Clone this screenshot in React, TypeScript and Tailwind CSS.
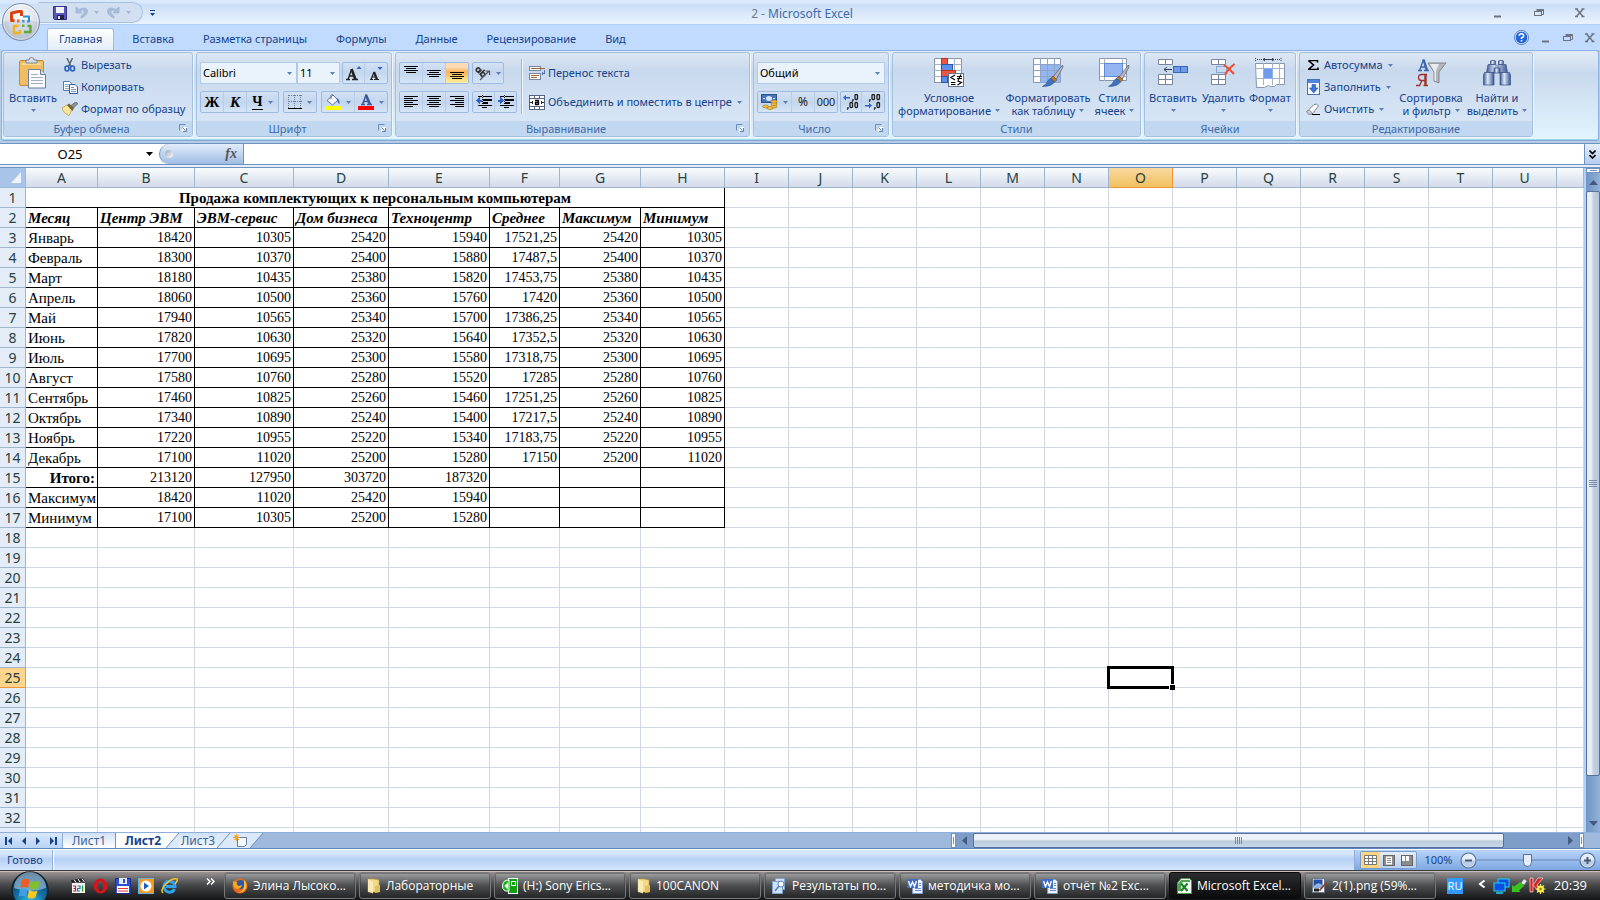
import React from "react";

type Kids = { children?: React.ReactNode };

/* ---------- small shared pieces ---------- */

const Caret = ({ className = "fill-[#5b80b5]" }: { className?: string }) => (
  <svg width="5" height="3" viewBox="0 0 5 3" className={`shrink-0 ${className}`} aria-hidden="true">
    <path d="M0 0h5L2.5 3z" />
  </svg>
);

const Launcher = ({ label }: { label: string }) => (
  <button aria-label={label} className="mr-px h-3 w-3">
    <svg width="9" height="9" viewBox="0 0 9 9" fill="none" aria-hidden="true">
      <path d="M6.5 .5h-6v6" stroke="#6a8fbf" />
      <rect x="3" y="3" width="5" height="5" fill="#fff" />
      <path d="M3.500 3.500l3 3M7.500 4v3.500H4" stroke="#5b80b5" />
    </svg>
  </button>
);

function Group({ title, width, launcher = true, children }: Kids & { title: string; width: string; launcher?: boolean }) {
  return (
    <section
      aria-label={title}
      className={`${width} flex h-[85px] shrink-0 flex-col overflow-hidden rounded-[3px] border border-[#a3c0de] bg-linear-to-b from-[#dde7f3] from-0% via-[#c9d9ed] via-20% to-[#dbe9f8] shadow-[1px_1px_0_#eef6ff]`}
    >
      <div className="flex min-h-0 flex-1">{children}</div>
      <div className="flex h-[15px] shrink-0 items-center bg-[#c2d8f0] text-[11px] leading-[15px] text-[#3e6aaa]">
        <span className="flex-1 text-center">{title}</span>
        {launcher && <Launcher label={title} />}
      </div>
    </section>
  );
}

function BigButton({ icon, lines, caretBelow = false, width }: { icon: React.ReactNode; lines: string[]; caretBelow?: boolean; width: string }) {
  return (
    <button className={`${width} flex shrink-0 flex-col items-center pt-[4px] text-[11px] leading-[13px] whitespace-nowrap text-[#15428b]`}>
      <span className="mb-[2px] flex h-[32px] items-center">{icon}</span>
      {lines.map((line, i) => (
        <span key={line} className="flex items-center gap-1">
          {line}
          {!caretBelow && i === lines.length - 1 && <Caret />}
        </span>
      ))}
      {caretBelow && (
        <span className="flex h-[12px] items-center">
          <Caret />
        </span>
      )}
    </button>
  );
}

function SmallButton({ icon, label, caret = false }: { icon: React.ReactNode; label: string; caret?: boolean }) {
  return (
    <button className="flex h-[22px] items-center gap-[3px] text-[11px] whitespace-nowrap text-[#15428b]">
      <span className="flex w-4 justify-center">{icon}</span>
      <span>{label}</span>
      {caret && <Caret className="ml-[2px] fill-[#5b80b5]" />}
    </button>
  );
}

const Cluster = ({ children }: Kids) => (
  <div className="flex h-[22px] divide-x divide-[#b7cde8] overflow-hidden rounded-[2px] border border-[#9dbbe0] bg-linear-to-b from-[#d3e1f3] via-[#c3d6ee] to-[#d6e5f7]">
    {children}
  </div>
);

function Tool({ label, width = "w-[23px]", active = false, children }: Kids & { label: string; width?: string; active?: boolean }) {
  return (
    <button
      aria-label={label}
      className={`${width} flex items-center justify-center gap-[5px] leading-none ${active ? "bg-linear-to-b from-[#fbdbb5] from-20% via-[#fdb150] via-45% to-[#fff0a0]" : ""}`}
    >
      {children}
    </button>
  );
}

function Picker({ label, value, width }: { label: string; value: string; width: string }) {
  return (
    <label className={`${width} flex h-[22px] items-center border border-[#b0cae9] bg-[#eaf2fb] pr-1`}>
      <span className="sr-only">{label}</span>
      <select defaultValue={value} className="h-full min-w-0 flex-1 appearance-none bg-transparent pl-[2px] text-[11px] leading-[16px] text-black outline-none">
        <option>{value}</option>
      </select>
      <Caret />
    </label>
  );
}

/* ---------- drawings ---------- */

const OfficeOrb = () => (
  <svg width="40" height="40" viewBox="0 0 40 40" aria-hidden="true">
    <defs>
      <radialGradient id="orb" cx="50%" cy="35%" r="65%">
        <stop offset="0" stopColor="#ffffff" />
        <stop offset=".6" stopColor="#dfe4ec" />
        <stop offset="1" stopColor="#a7b3c6" />
      </radialGradient>
    </defs>
    <circle cx="20" cy="20" r="18.500" fill="url(#orb)" stroke="#7f8ea6" />
    <circle cx="20" cy="20" r="17" fill="none" stroke="#fff" strokeOpacity=".8" />
    <path d="M2.500 20a17.500 17.500 0 0 0 35 0q-17-5-35 0z" fill="#b8c2d2" opacity=".45" />
    <g fill="none" strokeLinejoin="round">
      <path d="M13.500 18.500H10.500V11l7-1.500h3V14" stroke="#d8430f" strokeWidth="3" />
      <path d="M22 14.500h6v5H26" stroke="#2f8fd6" strokeWidth="2" />
      <path d="M17 24h-4V31h6v-3" stroke="#f2b21b" strokeWidth="2.400" />
      <path d="M23 30h6.500v-6h-3" stroke="#63a53a" strokeWidth="2.400" />
    </g>
    <path d="M16 17.500h2.500v3H16z" fill="#e76a1f" />
    <path d="M21 18h2.500v2.500H21z" fill="#3d9be0" />
    <path d="M16 22.500h2.500v2H16z" fill="#f5c02c" />
    <path d="M21 22.500h2.500v2.500H21z" fill="#6cb23e" />
  </svg>
);

const SaveIcon = () => (
  <svg width="14" height="14" viewBox="0 0 14 14" aria-hidden="true">
    <path d="M.5 .5h13v13h-12l-1-1z" fill="#5a55b8" stroke="#36318c" />
    <rect x="3" y="1" width="8" height="6" fill="#eef3fb" />
    <rect x="4" y="9" width="7" height="5" fill="#23214e" />
    <rect x="5" y="10" width="2" height="3" fill="#dfe4f2" />
  </svg>
);

const UndoIcon = ({ flip = false }: { flip?: boolean }) => (
  <svg width="13" height="13" viewBox="0 0 13 13" className={flip ? "-scale-x-100" : ""} aria-hidden="true">
    <path d="M1 1v6h6L5 5q3-2 4 0 1 2.500-3 5v2q7-3 6.500-7.500Q11.500 0 4 3.500z" fill="#a9bdd9" stroke="#94abcc" strokeWidth=".6" />
  </svg>
);

const WinIcon = ({ kind }: { kind: "min" | "restore" | "close" }) => (
  <svg width="10" height="10" viewBox="0 0 10 10" fill="none" stroke="#6d7480" aria-hidden="true">
    {kind === "min" && <path d="M1 8.500h7" strokeWidth="2" />}
    {kind === "restore" && (
      <>
        <path d="M3 1.500h6.500v5H8" />
        <path d="M2.500 2h7" strokeWidth="2" />
        <rect x=".5" y="3.500" width="7" height="4" />
      </>
    )}
    {kind === "close" && <path d="M1.500 1l6.500 7.500M8 1L1.500 8.500M0 1h3M6.500 1h3M0 8.500h3M6.500 8.500h3" strokeWidth="1.500" />}
  </svg>
);

const HelpIcon = () => (
  <svg width="15" height="15" viewBox="0 0 15 15" aria-hidden="true">
    <circle cx="7.500" cy="7.500" r="6.500" fill="#2467d6" stroke="#fff" strokeWidth="1.200" />
    <circle cx="7.500" cy="7.500" r="7" fill="none" stroke="#2f5ca8" strokeWidth=".8" />
    <path d="M5.300 6q0-2.200 2.200-2.200T9.700 5.700Q9.700 7 7.500 8v1M7.500 10v1.500" fill="none" stroke="#fff" strokeWidth="1.500" />
  </svg>
);

const PasteIcon = () => (
  <svg width="28" height="32" viewBox="0 0 28 32" aria-hidden="true">
    <rect x=".5" y="3.500" width="24" height="25" rx="1.500" fill="#f0bd62" stroke="#c28b3a" />
    <path d="M3 6h19v2H3z" fill="#f8d893" />
    <path d="M7 6V3h3q0-2.500 2.500-2.500T15 3h3v3z" fill="#d9dee6" stroke="#66707f" strokeWidth=".8" />
    <path d="M9.500 12.500h12l5 5v13.500h-17z" fill="#fbfcfe" stroke="#6b7f9d" />
    <path d="M21.500 12.500v5h5" fill="#d5deeb" stroke="#6b7f9d" />
    <path d="M12 17.500h7M12 20.500h12M12 23.500h12M12 26.500h12" stroke="#9fb0c8" />
  </svg>
);

const CutIcon = () => (
  <svg width="12" height="14" viewBox="0 0 12 14" fill="none" aria-hidden="true">
    <path d="M3 0l4 8.500M8.500 0L4.500 8.500" stroke="#5c6470" strokeWidth="1.500" />
    <ellipse cx="3" cy="10.500" rx="2" ry="2.500" stroke="#2b5fc0" strokeWidth="1.600" />
    <ellipse cx="8.500" cy="10.500" rx="2" ry="2.500" stroke="#2b5fc0" strokeWidth="1.600" />
  </svg>
);

const CopyIcon = () => (
  <svg width="15" height="13" viewBox="0 0 15 13" aria-hidden="true">
    <path d="M.5 .5h6l2 2v7h-8z" fill="#fff" stroke="#4f79b8" />
    <path d="M2 3.500h4M2 5.500h4M2 7.500h4" stroke="#88a9da" />
    <path d="M6.500 3.500h5.500l2.500 2.500v6.500h-8z" fill="#fff" stroke="#345fa6" />
    <path d="M8 6.500h3M8 8.500h5M8 10.500h5" stroke="#6f96d2" />
  </svg>
);

const PainterIcon = () => (
  <svg width="16" height="14" viewBox="0 0 16 14" aria-hidden="true">
    <path d="M0 6l5-3 5 5-3 5.500Q1 11 0 6z" fill="#f5e39a" stroke="#b8953a" strokeWidth=".7" />
    <path d="M5 3l2-1.500L12 6l-1.500 3z" fill="#7a6430" />
    <path d="M9 3.500L13.500 0 16 1.500 11.500 6z" fill="#8a8fa3" stroke="#4c5162" strokeWidth=".6" />
  </svg>
);

const Lines = ({ rows }: { rows: [number, number, number][] }) => (
  <svg width="14" height="14" viewBox="0 0 14 14" stroke="#000" shapeRendering="crispEdges" aria-hidden="true">
    {rows.map(([x, y, w]) => (
      <path key={y} d={`M${x} ${y + 0.5}h${w}`} />
    ))}
  </svg>
);

const lines = {
  top: [[0, 0, 14], [2, 2, 10], [0, 4, 14], [2, 6, 10]],
  middle: [[0, 4, 14], [2, 6, 10], [0, 8, 14], [2, 10, 10]],
  bottom: [[0, 6, 14], [2, 8, 10], [0, 10, 14], [2, 12, 10]],
  left: [[0, 1, 14], [0, 3, 9], [0, 5, 14], [0, 7, 9], [0, 9, 14], [0, 11, 9]],
  center: [[0, 1, 14], [2, 3, 10], [0, 5, 14], [2, 7, 10], [0, 9, 14], [2, 11, 10]],
  right: [[0, 1, 14], [5, 3, 9], [0, 5, 14], [5, 7, 9], [0, 9, 14], [5, 11, 9]],
} as Record<string, [number, number, number][]>;

const IndentIcon = ({ out = false }: { out?: boolean }) => (
  <svg width="16" height="14" viewBox="0 0 16 14" shapeRendering="crispEdges" aria-hidden="true">
    <path d="M2 1.500h4M7 1.500h9M7 10.500h9M2 10.500h4M7 12.500h4" stroke="#000" strokeWidth="1" />
    <path d="M7 4h9v2H7zM7 7h5v2H7z" />
    <path d="M6.500 0v14" stroke="#000" strokeDasharray="1 1" />
    {out ? <path d="M0 5.500L3.500 2v2.500H6v2H3.500V9z" fill="#2f63c8" /> : <path d="M5.500 5.500L2 2v2.500H0v2h2V9z" fill="#2f63c8" />}
  </svg>
);

const OrientationIcon = () => (
  <svg width="16" height="15" viewBox="0 0 16 15" fill="none" stroke="#333" aria-hidden="true">
    <g transform="rotate(45 6 6)" strokeWidth="1.500">
      <ellipse cx="2.500" cy="6.500" rx="1.800" ry="2" />
      <path d="M4.800 4v5" />
      <ellipse cx="9" cy="6.500" rx="1.800" ry="2" />
      <path d="M7 2v7" />
    </g>
    <path d="M5 14l9-9M10.500 5H14.500V9" stroke="#555" strokeWidth="1.200" />
  </svg>
);

const WrapIcon = () => (
  <svg width="16" height="16" viewBox="0 0 16 16" shapeRendering="crispEdges" aria-hidden="true">
    <rect x=".5" y="1.500" width="11" height="4" fill="#fff" stroke="#7586a0" />
    <path d="M2 3.500h14" stroke="#a0672c" strokeWidth="1" />
    <rect x=".5" y="8.500" width="11" height="6" fill="#fff" stroke="#7586a0" />
    <path d="M2 10.500h8M2 12.500h6" stroke="#a0672c" />
    <path d="M15 5v3h-2M13 7v3" fill="none" stroke="#4a72b4" />
  </svg>
);

const MergeIcon = () => (
  <svg width="16" height="15" viewBox="0 0 16 15" fill="none" aria-hidden="true">
    <rect x=".5" y=".5" width="15" height="14" fill="#fff" stroke="#55657f" />
    <path d="M0 3.500h16M0 11.500h16M5.500 0v3M10.500 0v3M5.500 12v3M10.500 12v3" stroke="#55657f" />
    <path d="M1 7.500h3M12 7.500h3M3.500 6v3M12.500 6v3" stroke="#222" />
    <path d="M6 5.500h3.500V10M9.500 7.500H6.500v2h3" stroke="#000" strokeWidth="1.300" />
  </svg>
);

const BorderIcon = () => (
  <svg width="14" height="14" viewBox="0 0 14 14" shapeRendering="crispEdges" fill="none" aria-hidden="true">
    <path d="M.5 .5h13M.5 6.500h13M.5 0v13M6.500 0v13M12.500 0v13" stroke="#6c7d99" strokeDasharray="1 1" />
    <path d="M0 13.500h14" stroke="#000" strokeWidth="2" />
  </svg>
);

const FillIcon = () => (
  <svg width="16" height="16" viewBox="0 0 16 16" aria-hidden="true">
    <path d="M2 6.500L8 1l5 5-5.500 5z" fill="#f2f6fc" stroke="#5c7499" />
    <path d="M6 5V1.500Q6.500 0 8 1" fill="none" stroke="#5c7499" />
    <path d="M11 4q4 .5 3.500 6-2-1-2.500-4z" fill="#3a6fc4" />
    <rect y="12" width="16" height="4" fill="#ffff00" />
  </svg>
);

const FontColorIcon = () => (
  <svg width="16" height="16" viewBox="0 0 16 16" aria-hidden="true">
    <path d="M3 10.500h4M9 10.500h5M4.500 10.500L8 1l4 9.500M6 7.500h4.500" fill="none" stroke="#3b5998" strokeWidth="1.500" />
    <path d="M8 1l4 9.500" stroke="#3b5998" strokeWidth="2.600" />
    <rect y="12" width="16" height="4" fill="#ff0000" />
  </svg>
);

const MoneyIcon = () => (
  <svg width="17" height="16" viewBox="0 0 17 16" aria-hidden="true">
    <rect x=".5" y=".5" width="15" height="8" fill="#4a76be" stroke="#29508f" />
    <ellipse cx="8" cy="4.500" rx="3" ry="2.500" fill="#d7e5f8" />
    <path d="M2 4.500h2M12 4.500h2" stroke="#d7e5f8" />
    <g fill="#f3c33f" stroke="#9a6d10" strokeWidth=".6">
      <ellipse cx="4.500" cy="12.500" rx="3" ry="1.500" />
      <ellipse cx="9" cy="14" rx="3" ry="1.500" />
      <ellipse cx="13" cy="12.500" rx="3" ry="1.500" />
      <ellipse cx="13" cy="10" rx="3" ry="1.500" />
      <ellipse cx="13" cy="7.500" rx="3" ry="1.500" />
    </g>
  </svg>
);

/* Digits on a fine pixel grid: a comma followed by one or two zeros. */
const Zeros = ({ x, y, two = false }: { x: number; y: number; two?: boolean }) => (
  <g fill="none" stroke="#222" strokeWidth="1.300">
    <path d={`M${x + 1} ${y + 5}v1.500l-1 1`} />
    <rect x={x + 3} y={y + 0.5} width="2.500" height="5" rx="1" />
    {two && <rect x={x + 8} y={y + 0.5} width="2.500" height="5" rx="1" />}
  </g>
);

const DecimalIcon = ({ more = false }: { more?: boolean }) => (
  <svg width="17" height="16" viewBox="0 0 17 16" aria-hidden="true">
    {more ? (
      <>
        <Zeros x={9} y={0} />
        <Zeros x={4} y={8} two />
        <path d="M0 3.500L3 1v2h4v1.500H3v2z" fill="#2f63c8" />
      </>
    ) : (
      <>
        <Zeros x={4} y={0} two />
        <Zeros x={9} y={8} />
        <path d="M7 11.500L4 9v2H0v1.500h4v2z" fill="#2f63c8" />
      </>
    )}
  </svg>
);

const CondIcon = () => (
  <svg width="30" height="30" viewBox="0 0 30 30" aria-hidden="true">
    <path d="M.5 .5h27v24h-27z" fill="#fff" stroke="#8896ad" />
    <path d="M.5 6.500h27M.5 12.500h27M.5 18.500h27M7.500 0v25M13.500 0v25M20.500 0v25" stroke="#a5b1c6" />
    <rect x="7.500" y=".5" width="6" height="6" fill="#f0553f" stroke="#b53322" />
    <rect x="7.500" y="6.500" width="11" height="6" fill="#5f8ee8" stroke="#2c55ac" />
    <rect x="7.500" y="12.500" width="14" height="6" fill="#f0553f" stroke="#b53322" />
    <rect x="7.500" y="18.500" width="6" height="6" fill="#5f8ee8" stroke="#2c55ac" />
    <rect x="14.500" y="15.500" width="15" height="13" fill="#fff" stroke="#66748c" />
    <path d="M21 17l-4 2.500 4 2.500M17 24.500h4.500M17 26.500h4.500M23 18.500h5M23 20.500h5M27 16.500l-3 6M23.500 23l4 1.500-4 2.500" fill="none" stroke="#000" strokeWidth="1.200" />
  </svg>
);

const Brush = () => (
  <>
    <path d="M29.500 7L20 19l3 2.500L30 9z" fill="#b9bcc4" stroke="#5f636e" strokeWidth=".8" />
    <path d="M20 18l4 4-2.500 2-4-3.500z" fill="#b87834" stroke="#764816" strokeWidth=".6" />
    <path d="M18 20.500l3.500 3.500q-3 4.500-12 4.500 4-2 5-5 1-2.500 3.500-3z" fill="#4273bf" stroke="#2f5392" strokeWidth=".6" />
  </>
);

const FormatTableIcon = () => (
  <svg width="31" height="30" viewBox="0 0 31 30" aria-hidden="true">
    <path d="M.5 .5h27v24h-27z" fill="#fff" stroke="#8896ad" />
    <path d="M7 6.500h20.500v18H7z" fill="#93b5f2" />
    <path d="M.5 6.500h27M.5 12.500h27M.5 18.500h27M7.500 0v25M14.500 0v25M21.500 0v25" stroke="#8fa3c6" />
    <Brush />
  </svg>
);

const CellStyleIcon = () => (
  <svg width="31" height="30" viewBox="0 0 31 30" aria-hidden="true">
    <path d="M.5 .5h27v22h-27z" fill="#fff" stroke="#8896ad" />
    <path d="M.5 5.500h27M5.500 0v23M23.500 0v23M.5 18.500h27" stroke="#a5b1c6" />
    <rect x="5.500" y="5.500" width="18" height="13" fill="#93b5f2" stroke="#5f8ad6" />
    <Brush />
  </svg>
);

const Cells = () => (
  <>
    <path d="M.5 .5h14v5h-14zM.5 15.500h14v10h-14z" fill="#fff" stroke="#77869f" />
    <path d="M7.500 .5v5M.5 20.500h14M7.500 15.500v10" stroke="#77869f" />
  </>
);

const InsertIcon = () => (
  <svg width="31" height="28" viewBox="0 0 31 28" aria-hidden="true">
    <Cells />
    <rect x="15.500" y="7.500" width="14" height="6" fill="#6e9bea" stroke="#3b65b5" />
    <path d="M22.500 7.500v6" stroke="#3b65b5" />
    <path d="M6 10.500h8M9 8l-3 2.500L9 13" fill="none" stroke="#333f55" />
  </svg>
);

const DeleteIcon = () => (
  <svg width="25" height="28" viewBox="0 0 25 28" aria-hidden="true">
    <Cells />
    <path d="M5.500 7.500h10v6h-10z" fill="none" stroke="#4a72b4" strokeDasharray="1 1" />
    <path d="M13 6q5 3 10 9M23.500 5Q17 10 14 16" fill="none" stroke="#f04a2c" strokeWidth="2" />
  </svg>
);

const FormatIcon = () => (
  <svg width="31" height="30" viewBox="0 0 31 30" aria-hidden="true">
    <path d="M.5 5.500h29v21h-8l-2 2h-4l-2-1-4 2h-8z" fill="#fff" stroke="#8896ad" />
    <path d="M.5 10.500h29M.5 20.500h29M8.500 5v22M17.500 5v22M24.500 5v22" stroke="#a5b1c6" />
    <rect x="8.500" y="10.500" width="9" height="10" fill="#6e9bea" stroke="#8fb0ea" />
    <path d="M.5 0v4M26 0v4" stroke="#333f55" strokeDasharray="1 1" />
    <path d="M2 1.500h5M20 1.500h5" stroke="#333f55" strokeDasharray="1 1" />
    <path d="M8 1.500h11M10 0L8 1.500l2 1.500M17 0l2 1.500-2 1.500" fill="none" stroke="#333f55" />
  </svg>
);

const FillDownIcon = () => (
  <svg width="13" height="16" viewBox="0 0 13 16" aria-hidden="true">
    <rect x=".5" y=".5" width="12" height="15" fill="#f4f8ff" stroke="#4a6fae" />
    <rect x="1" y="1" width="11" height="3" fill="#4f84df" />
    <path d="M5 5.500h3.500V9H11l-4.300 5L2.500 9H5z" fill="#3d74d6" stroke="#2656ab" strokeWidth=".6" />
  </svg>
);

const EraserIcon = () => (
  <svg width="14" height="13" viewBox="0 0 14 13" aria-hidden="true">
    <path d="M.5 9L8 1.500q3-1.500 4.500 1.500L6 11q-4 1-5.500-2z" fill="#fff" stroke="#77808f" />
    <path d="M.5 9q.5-2 3-1.500T6 11q-4 1-5.500-2z" fill="#c9ced8" stroke="#77808f" strokeWidth=".6" />
    <path d="M6 11.500h8" stroke="#000" />
  </svg>
);

const SortIcon = () => (
  <svg width="31" height="30" viewBox="0 0 31 30" aria-hidden="true">
    <g fill="none" stroke="#3a66ae" strokeWidth="1.300">
      <path d="M2 12.500h4M8 12.500h5M3.500 12.500L7.500 1.500M5 9h5" />
      <path d="M7.500 1.500l3.500 11" strokeWidth="2.400" />
    </g>
    <g fill="none" stroke="#a03028" strokeWidth="1.300">
      <path d="M11 16.500H5.500q-3 0-3 3t3 3H9M0 27.500h3.500L6 22.500M7.500 27.500H12" />
      <path d="M9.500 16.500v11" strokeWidth="2.400" />
    </g>
    <path d="M12 5h18l-7 9v11l-5-2v-9z" fill="#b3b6bb" stroke="#74777d" strokeWidth=".8" />
    <path d="M14 6h9l-3 7v10l-1.500-.5V14z" fill="#e9eaec" />
  </svg>
);

const BinocularsIcon = () => (
  <svg width="28" height="26" viewBox="0 0 28 26" aria-hidden="true">
    <defs>
      <linearGradient id="bino">
        <stop offset="0" stopColor="#40598f" />
        <stop offset=".4" stopColor="#dce7fa" />
        <stop offset="1" stopColor="#3a5692" />
      </linearGradient>
    </defs>
    <g fill="url(#bino)" stroke="#364f85" strokeWidth=".7">
      <rect x="7.500" y=".5" width="5" height="4" rx="1" />
      <rect x="15.500" y=".5" width="5" height="4" rx="1" />
      <path d="M5 4.500h8v8H3.500zM15 4.500h8l1.500 8H15z" />
      <path d="M1.500 12.500h9.500V25H.5V15z" />
      <path d="M17 12.500h9.500l1 2.500v10H17z" />
      <rect x="11" y="8" width="6" height="5" />
    </g>
  </svg>
);

const SelectAllIcon = () => (
  <svg width="10" height="11" viewBox="0 0 10 11" aria-hidden="true">
    <path d="M10 0v11H0z" fill="#eef5ff" />
  </svg>
);

/* ---------- window top ---------- */

function TitleBar() {
  return (
    <header className="flex h-[25px] shrink-0 items-center border-b border-[#b0cff7] bg-linear-to-b from-[#d9e8fa] from-12% via-[#cbdef6] via-20% to-[#eaf3fe] pt-px pr-[15px]">
      <div className="ml-[38px] flex h-[21px] w-[105px] items-center rounded-r-full border border-[#a9c1e0] border-l-transparent bg-[#d1dff1] pl-[14px]">
        <button aria-label="Сохранить"><SaveIcon /></button>
        <button aria-label="Отменить" className="ml-2 flex items-center gap-1.5"><UndoIcon /><Caret className="fill-[#a5b6cf]" /></button>
        <button aria-label="Вернуть" className="ml-2 flex items-center gap-1.5"><UndoIcon flip /><Caret className="fill-[#a5b6cf]" /></button>
      </div>
      <button aria-label="Настройка панели быстрого доступа" className="ml-[7px] flex flex-col items-center gap-[2px]">
        <span className="h-px w-[5px] bg-[#15428b]" />
        <Caret className="fill-[#15428b]" />
      </button>
      <h1 className="flex-1 pt-[3px] pr-[44px] text-center text-[12px] leading-[18px] text-[#3e6aaa]"><span className="text-[#6f7b8d]">2 -</span> Microsoft Excel</h1>
      <div className="flex gap-[31px]">
        <button aria-label="Свернуть"><WinIcon kind="min" /></button>
        <button aria-label="Восстановить"><WinIcon kind="restore" /></button>
        <button aria-label="Закрыть"><WinIcon kind="close" /></button>
      </div>
    </header>
  );
}

const tabs = ["Главная", "Вставка", "Разметка страницы", "Формулы", "Данные", "Рецензирование", "Вид"];

function TabRow() {
  return (
    <nav className="flex h-[25px] shrink-0 items-end bg-[#c1dbff] pr-[5px] pl-[47px]">
      <div className="flex flex-1 gap-[7px]">
        {tabs.map((t, i) => (
          <button
            key={t}
            className={`h-[22px] px-[11px] text-[11px] text-[#15428b] ${i === 0 ? "rounded-t-[3px] border border-b-0 border-[#9ebde6] bg-linear-to-b from-white to-[#e3edf9]" : ""}`}
          >
            {t}
          </button>
        ))}
      </div>
      <div className="flex h-full items-center gap-[12px]">
        <button aria-label="Справка"><HelpIcon /></button>
        <button aria-label="Свернуть окно"><WinIcon kind="min" /></button>
        <button aria-label="Восстановить окно"><WinIcon kind="restore" /></button>
        <button aria-label="Закрыть окно"><WinIcon kind="close" /></button>
      </div>
    </nav>
  );
}

function Ribbon() {
  return (
    <div className="shrink-0 bg-[#b4cbea] px-px pb-[3px]">
      <div className="flex h-[90px] gap-[3px] rounded-[3px] border border-[#8db2e3] border-b-[#9fd5e8] bg-linear-to-b from-[#dfe9f5] from-5% via-[#c9d9ed] via-25% to-[#e2f4fe] px-px pt-px shadow-[0_1px_0_#8aa9cf]">
        <Group title="Буфер обмена" width="w-[190px]">
          <BigButton icon={<PasteIcon />} lines={["Вставить"]} caretBelow width="w-[58px]" />
          <div className="flex flex-col items-start pt-px">
            <SmallButton icon={<CutIcon />} label="Вырезать" />
            <SmallButton icon={<CopyIcon />} label="Копировать" />
            <SmallButton icon={<PainterIcon />} label="Формат по образцу" />
          </div>
        </Group>

        <Group title="Шрифт" width="w-[196px]">
          <div className="flex flex-1 flex-col gap-[7px] px-[3px] pt-[9px] font-[Liberation_Serif,serif] text-black">
            <div className="flex justify-between">
              <div className="flex font-[Noto_Sans,sans-serif]">
                <Picker label="Шрифт" value="Calibri" width="w-[97px]" />
                <Picker label="Размер шрифта" value="11" width="w-[43px]" />
              </div>
              <Cluster>
                <Tool label="Увеличить размер шрифта" width="w-[22px]">
                  <svg width="16" height="16" viewBox="0 0 16 16" fill="none" stroke="#222" aria-hidden="true">
                    <path d="M0 14.500h4M6 14.500h6M2 14.500L5.500 4.500M3.500 11h5" strokeWidth="1.300" />
                    <path d="M5.500 4l4 10.500" strokeWidth="2.600" />
                    <path d="M10.500 4h5L13 1z" fill="#2f63c8" stroke="none" />
                  </svg>
                </Tool>
                <Tool label="Уменьшить размер шрифта" width="w-[22px]">
                  <svg width="16" height="16" viewBox="0 0 16 16" fill="none" stroke="#222" aria-hidden="true">
                    <path d="M2 14.500h3M6 14.500h5M3 14.500L6 7M4 12h4" strokeWidth="1.200" />
                    <path d="M6 7l3 7.500" strokeWidth="2.200" />
                    <path d="M9.500 2h5L12 5z" fill="#2f63c8" stroke="none" />
                  </svg>
                </Tool>
              </Cluster>
            </div>
            <div className="flex justify-between">
              <Cluster>
                <Tool label="Полужирный"><b className="text-[15px]">Ж</b></Tool>
                <Tool label="Курсив"><b className="text-[15px] italic">К</b></Tool>
                <Tool label="Подчеркнутый" width="w-[31px]"><b className="border-b border-black text-[14px] leading-[14px]">Ч</b><Caret /></Tool>
              </Cluster>
              <Cluster>
                <Tool label="Границы" width="w-[32px]"><BorderIcon /><Caret /></Tool>
              </Cluster>
              <Cluster>
                <Tool label="Цвет заливки" width="w-[33px]"><FillIcon /><Caret /></Tool>
                <Tool label="Цвет текста" width="w-[32px]"><FontColorIcon /><Caret /></Tool>
              </Cluster>
            </div>
          </div>
        </Group>

        <Group title="Выравнивание" width="w-[355px]">
          <div className="flex flex-col gap-[7px] pt-[9px] pl-[3px]">
            <div className="flex gap-[3px]">
              <Cluster>
                <Tool label="По верхнему краю"><Lines rows={lines.top} /></Tool>
                <Tool label="По середине"><Lines rows={lines.middle} /></Tool>
                <Tool label="По нижнему краю" width="w-[22px]" active><Lines rows={lines.bottom} /></Tool>
              </Cluster>
              <Cluster>
                <Tool label="Ориентация" width="w-[30px]"><OrientationIcon /><Caret /></Tool>
              </Cluster>
            </div>
            <div className="flex gap-[3px]">
              <Cluster>
                <Tool label="По левому краю"><Lines rows={lines.left} /></Tool>
                <Tool label="По центру"><Lines rows={lines.center} /></Tool>
                <Tool label="По правому краю" width="w-[22px]"><Lines rows={lines.right} /></Tool>
              </Cluster>
              <Cluster>
                <Tool label="Уменьшить отступ" width="w-[22px]"><IndentIcon out /></Tool>
                <Tool label="Увеличить отступ" width="w-[21px]"><IndentIcon /></Tool>
              </Cluster>
            </div>
          </div>
          <div className="mt-[6px] ml-[4px] h-[55px] w-[2px] border-l border-[#9dbbe0] bg-[#eef5fd]" />
          <div className="flex flex-col items-start gap-[7px] pt-[9px] pl-[6px]">
            <SmallButton icon={<WrapIcon />} label="Перенос текста" />
            <SmallButton icon={<MergeIcon />} label="Объединить и поместить в центре" caret />
          </div>
        </Group>

        <Group title="Число" width="w-[136px]">
          <div className="flex flex-1 flex-col gap-[7px] px-[3px] pt-[9px]">
            <Picker label="Числовой формат" value="Общий" width="w-full" />
            <div className="flex justify-between text-[12px] text-[#222]">
              <Cluster>
                <Tool label="Финансовый формат" width="w-[34px]"><MoneyIcon /><Caret /></Tool>
                <Tool label="Процентный формат" width="w-[23px]">%</Tool>
                <Tool label="Формат с разделителями" width="w-[22px]"><span className="font-[Liberation_Sans_Narrow,sans-serif] text-[11px]">000</span></Tool>
              </Cluster>
              <Cluster>
                <Tool label="Увеличить разрядность" width="w-[21px]"><DecimalIcon more /></Tool>
                <Tool label="Уменьшить разрядность" width="w-[22px]"><DecimalIcon /></Tool>
              </Cluster>
            </div>
          </div>
        </Group>

        <Group title="Стили" width="w-[249px]" launcher={false}>
          <BigButton icon={<CondIcon />} lines={["Условное", "форматирование"]} width="w-[112px]" />
          <BigButton icon={<FormatTableIcon />} lines={["Форматировать", "как таблицу"]} width="w-[86px]" />
          <BigButton icon={<CellStyleIcon />} lines={["Стили", "ячеек"]} width="w-[47px]" />
        </Group>

        <Group title="Ячейки" width="w-[152px]" launcher={false}>
          <BigButton icon={<InsertIcon />} lines={["Вставить"]} caretBelow width="w-[56px]" />
          <BigButton icon={<DeleteIcon />} lines={["Удалить"]} caretBelow width="w-[45px]" />
          <BigButton icon={<FormatIcon />} lines={["Формат"]} caretBelow width="w-[48px]" />
        </Group>

        <Group title="Редактирование" width="w-[234px]" launcher={false}>
          <div className="flex w-[97px] flex-col items-start pt-px pl-[5px]">
            <SmallButton
              icon={<svg width="11" height="10" viewBox="0 0 11 10" aria-hidden="true"><path d="M.5 .5h9v2M.5 .5L5.500 5 .5 9.500h9.500v-2" fill="none" stroke="#000" strokeWidth="1.600" /></svg>}
              label="Автосумма"
              caret
            />
            <SmallButton icon={<FillDownIcon />} label="Заполнить" caret />
            <SmallButton icon={<EraserIcon />} label="Очистить" caret />
          </div>
          <BigButton icon={<SortIcon />} lines={["Сортировка", "и фильтр"]} width="w-[68px]" />
          <BigButton icon={<BinocularsIcon />} lines={["Найти и", "выделить"]} width="w-[64px]" />
        </Group>
      </div>
    </div>
  );
}

function FormulaBar() {
  return (
    <div className="flex h-[22px] shrink-0 items-stretch border-y border-[#6f93c0] bg-white">
      <input aria-label="Имя" defaultValue="O25" className="w-[140px] shrink-0 bg-transparent text-center text-[13px] leading-[18px] text-black outline-none" />
      <button aria-label="Список имен" className="flex w-[19px] items-center justify-center">
        <svg width="7" height="4" viewBox="0 0 7 4" aria-hidden="true"><path d="M0 0h7L3.500 4z" /></svg>
      </button>
      <div className="flex w-[85px] items-center justify-between rounded-l-full border-r border-l border-[#6f93c0] bg-linear-to-b from-[#e3edfa] to-[#9fbce3] pr-[6px] pl-[5px]">
        <span className="h-2 w-2 rounded-full bg-linear-to-br from-[#9aa9bf] to-white" />
        <button aria-label="Вставить функцию" className="font-[Liberation_Serif,serif] text-[14px] leading-none font-bold text-[#555] italic">fx</button>
      </div>
      <input aria-label="Строка формул" className="min-w-0 flex-1 bg-white px-1 text-[13px] outline-none" />
      <button aria-label="Развернуть строку формул" className="flex w-4 items-center justify-center border-l border-[#6f93c0] bg-linear-to-b from-[#e6effb] to-[#b5cdef]">
        <svg width="7" height="9" viewBox="0 0 7 9" fill="none" stroke="#000" strokeWidth="1.600" aria-hidden="true"><path d="M.5 .5l3 3 3-3M.5 5l3 3 3-3" /></svg>
      </button>
    </div>
  );
}

/* ---------- sheet ---------- */

const columns = [
  { name: "A", w: "w-[72px]" }, { name: "B", w: "w-[97px]" }, { name: "C", w: "w-[99px]" }, { name: "D", w: "w-[95px]" },
  { name: "E", w: "w-[101px]" }, { name: "F", w: "w-[70px]" }, { name: "G", w: "w-[81px]" }, { name: "H", w: "w-[84px]" },
  ..."IJKLMNOPQRSTU".split("").map((name) => ({ name, w: "w-[64px]" })),
  { name: "", w: "" },
];

const sheet: string[][] = [
  ["Продажа комплектующих к персональным компьютерам"],
  ["Месяц", "Центр ЭВМ", "ЭВМ-сервис", "Дом бизнеса", "Техноцентр", "Среднее", "Максимум", "Минимум"],
  ["Январь", "18420", "10305", "25420", "15940", "17521,25", "25420", "10305"],
  ["Февраль", "18300", "10370", "25400", "15880", "17487,5", "25400", "10370"],
  ["Март", "18180", "10435", "25380", "15820", "17453,75", "25380", "10435"],
  ["Апрель", "18060", "10500", "25360", "15760", "17420", "25360", "10500"],
  ["Май", "17940", "10565", "25340", "15700", "17386,25", "25340", "10565"],
  ["Июнь", "17820", "10630", "25320", "15640", "17352,5", "25320", "10630"],
  ["Июль", "17700", "10695", "25300", "15580", "17318,75", "25300", "10695"],
  ["Август", "17580", "10760", "25280", "15520", "17285", "25280", "10760"],
  ["Сентябрь", "17460", "10825", "25260", "15460", "17251,25", "25260", "10825"],
  ["Октябрь", "17340", "10890", "25240", "15400", "17217,5", "25240", "10890"],
  ["Ноябрь", "17220", "10955", "25220", "15340", "17183,75", "25220", "10955"],
  ["Декабрь", "17100", "11020", "25200", "15280", "17150", "25200", "11020"],
  ["Итого:", "213120", "127950", "303720", "187320", "", "", ""],
  ["Максимум", "18420", "11020", "25420", "15940", "", "", ""],
  ["Минимум", "17100", "10305", "25200", "15280", "", "", ""],
];

function Cell({ row, col }: { row: number; col: number }) {
  const inTable = row <= 17 && col < 8;
  const text = inTable ? sheet[row - 1][col] : "";
  const selected = row === 25 && columns[col].name === "O";
  let look = "text-right text-[14px]";
  if (col === 0) look = row === 15 ? "text-right font-bold" : "text-left";
  if (row === 2) look = "text-left font-bold italic";
  return (
    <td className={`h-5 overflow-visible border-r border-b px-[2px] whitespace-nowrap ${inTable ? "border-black" : "border-[#d0d7e5]"} ${look} ${selected ? "relative" : ""}`}>
      {text}
      {selected && (
        <span className="absolute -top-[2px] -right-[2px] -bottom-[2px] -left-[2px] z-10 border-[3px] border-black">
          <span className="absolute -right-[4px] -bottom-[4px] h-[6px] w-[6px] border-t border-l border-white bg-black" />
        </span>
      )}
    </td>
  );
}

function Grid() {
  return (
    <div className="min-w-0 flex-1 overflow-hidden bg-white">
      <table className="w-full table-fixed border-separate border-spacing-0 font-[Liberation_Serif,serif] text-[15px] leading-[18px] text-black">
        <colgroup>
          <col className="w-[26px]" />
          {columns.map((c, i) => <col key={i} className={c.w} />)}
        </colgroup>
        <thead className="font-[Noto_Sans,sans-serif] text-[14px] text-[#27413e]">
          <tr>
            <th className="h-5 border-r border-b border-[#9eb6ce] bg-[#a9c4e9] p-0">
              <span className="flex justify-end pr-[4px]"><SelectAllIcon /></span>
            </th>
            {columns.map((c, i) => (
              <th
                key={i}
                scope="col"
                className={`h-5 border-r border-b p-0 font-normal ${c.name === "O" ? "border-[#f29536] bg-linear-to-b from-[#f9d99f] to-[#f1c15f]" : "border-[#9eb6ce] bg-linear-to-b from-[#f9fcfd] to-[#d3dbe9]"}`}
              >
                {c.name}
              </th>
            ))}
          </tr>
        </thead>
        <tbody>
          {Array.from({ length: 33 }, (_, i) => i + 1).map((row) => (
            <tr key={row}>
              <th
                scope="row"
                className={`h-5 border-r border-b p-0 font-[Noto_Sans,sans-serif] text-[14px] font-normal text-[#27413e] ${row === 25 ? "border-[#f29536] bg-[#ffd58d]" : "border-[#9eb6ce] bg-[#e4ecf7]"}`}
              >
                {row <= 32 ? row : ""}
              </th>
              {row === 1 ? (
                <>
                  <td colSpan={8} className="h-5 border-r border-b border-black p-0 text-center font-bold">{sheet[0][0]}</td>
                  {columns.slice(8).map((_, c) => <Cell key={c} row={1} col={c + 8} />)}
                </>
              ) : (
                columns.map((_, c) => <Cell key={c} row={row} col={c} />)
              )}
            </tr>
          ))}
        </tbody>
      </table>
    </div>
  );
}

function VerticalScroll() {
  return (
    <div className="flex w-4 shrink-0 flex-col items-center border-l-2 border-[#b3d0f7] bg-linear-to-r from-[#6f94c6] to-[#93b1d8]">
      <span className="flex h-[5px] w-full items-center justify-center border border-[#6f93c0] bg-white"><span className="h-px w-[7px] bg-[#6f93c0]" /></span>
      <button aria-label="Вверх" className="flex h-[18px] items-center"><svg width="9" height="5" viewBox="0 0 9 5" aria-hidden="true"><path d="M0 5h9L4.500 0z" fill="#45587e" /></svg></button>
      <div className="flex min-h-0 w-full flex-1 flex-col pb-[38px]">
        <button aria-label="Прокрутка по вертикали" className="flex w-full flex-1 flex-col items-center justify-center gap-px rounded-[2px] border border-[#5a6f9c] bg-linear-to-r from-[#e9eef5] from-35% via-[#c3cfe0] via-55% to-[#b4c6de]">
          {[0, 1, 2, 3].map((n) => <span key={n} className="h-px w-2 bg-[#7988a5]" />)}
        </button>
      </div>
      <button aria-label="Вниз" className="flex h-[18px] items-center"><svg width="9" height="5" viewBox="0 0 9 5" aria-hidden="true"><path d="M0 0h9L4.500 5z" fill="#45587e" /></svg></button>
    </div>
  );
}

const Slant = ({ left, right }: { left: string; right: string }) => (
  <svg width="13" height="15" viewBox="0 0 13 15" className="shrink-0" aria-hidden="true">
    <path d="M0 0h13L0 15z" fill={left} />
    <path d="M13 0v15H0z" fill={right} />
    <path d="M13 0L0 15" stroke="#6f93c0" fill="none" />
  </svg>
);

const NavIcon = ({ d }: { d: string }) => (
  <svg width="8" height="8" viewBox="0 0 8 8" fill="#15428b" aria-hidden="true"><path d={d} /></svg>
);

function SheetBar() {
  const nav: [string, string][] = [
    ["Первый лист", "M0 0h2v8H0zM7 0v8L3 4z"],
    ["Предыдущий лист", "M6 0v8L2 4z"],
    ["Следующий лист", "M2 0v8l4-4z"],
    ["Последний лист", "M1 0v8l4-4zM6 0h2v8H6z"],
  ];
  return (
    <div className="flex h-[17px] shrink-0 items-start border-t border-b border-t-[#8eaedb] border-b-[#5f86b8] bg-[#9fb9dd]">
      <div className="flex h-full w-[63px] items-center justify-between border-r border-[#8eaedb] bg-linear-to-b from-[#d9e8fb] to-[#b9d3f5] px-[5px]">
        {nav.map(([label, d]) => <button key={label} aria-label={label} className="flex"><NavIcon d={d} /></button>)}
      </div>
      <div className="flex h-[15px] text-[12px] leading-[15px] text-[#3f6293]">
        <button className="w-[53px] border-r border-[#6f93c0] bg-linear-to-b from-[#cfe1f8] to-white text-center">Лист1</button>
        <button className="w-[50px] bg-white pl-[4px] text-center font-bold text-[#15428b]">Лист2</button>
        <Slant left="#fff" right="#dbe9fb" />
        <button className="w-[38px] bg-linear-to-b from-[#cfe1f8] to-[#f4f9ff] text-center">Лист3</button>
        <Slant left="#dbe9fb" right="#dbe9fb" />
        <button aria-label="Вставить лист" className="flex w-[20px] items-center justify-center bg-[#dbe9fb]">
          <svg width="15" height="13" viewBox="0 0 15 13" aria-hidden="true">
            <path d="M4.500 3.500h9v7l-2 2h-7z" fill="#f4f8ff" stroke="#6b7f9d" />
            <path d="M3.500 0v7M0 3.500h7M1 1l5 5M6 1L1 6" stroke="#e9a227" />
          </svg>
        </button>
        <Slant left="#dbe9fb" right="#9fb9dd" />
      </div>
      <div className="flex-1" />
      <div className="flex h-[15px] w-[633px] items-stretch bg-[#7e9dc9]">
        <span className="flex w-[5px] items-center justify-center border border-[#6f93c0] bg-white"><span className="h-[7px] w-px bg-[#6f93c0]" /></span>
        <button aria-label="Влево" className="flex w-[17px] items-center justify-center"><svg width="5" height="9" viewBox="0 0 5 9" aria-hidden="true"><path d="M5 0v9L0 4.500z" fill="#45587e" /></svg></button>
        <button aria-label="Прокрутка по горизонтали" className="flex flex-1 items-center justify-center gap-px rounded-[2px] border border-[#5a6f9c] bg-linear-to-b from-[#eef2f8] from-40% via-[#bccada] via-55% to-[#c9d8ea]">
          {[0, 1, 2, 3].map((n) => <span key={n} className="h-[7px] w-px bg-[#7988a5]" />)}
        </button>
        <span className="w-[58px]" />
        <button aria-label="Вправо" className="flex w-[17px] items-center justify-center"><svg width="5" height="9" viewBox="0 0 5 9" aria-hidden="true"><path d="M0 0v9l5-4.500z" fill="#45587e" /></svg></button>
        <span className="flex w-[5px] items-center justify-center border border-[#6f93c0] bg-white"><span className="h-[7px] w-px bg-[#6f93c0]" /></span>
      </div>
      <span className="w-4 shrink-0" />
    </div>
  );
}

const ZoomKnob = ({ plus = false }: { plus?: boolean }) => (
  <svg width="17" height="17" viewBox="0 0 17 17" aria-hidden="true">
    <circle cx="8.500" cy="8.500" r="7.500" fill="#e4edf8" stroke="#55729f" strokeWidth="1.200" />
    <path d="M2 8.500a6.500 6.500 0 0 0 13 0z" fill="#b9cde8" />
    <path d="M5 8.500h7" stroke="#4a5a75" strokeWidth="2" />
    {plus && <path d="M8.500 5v7" stroke="#4a5a75" strokeWidth="2" />}
  </svg>
);

function StatusBar() {
  return (
    <div className="flex h-[21px] shrink-0 items-stretch border-t border-white bg-linear-to-b from-[#d6e6fb] from-20% via-[#b5d0f5] via-45% to-[#d5e5fa] text-[11px] text-[#15428b]">
      <span className="flex w-[53px] items-center border-r border-[#8eaedb] pl-[7px]">Готово</span>
      <div className="flex-1 border-l border-white" />
      <div className="flex w-[246px] items-center border-l border-[#8eaedb] bg-linear-to-b from-[#b9d4f8] to-[#7ea8e2] pl-[5px]">
        <div className="flex h-[18px] w-[57px] items-stretch rounded-[2px] border border-[#7b9ccb] bg-linear-to-b from-[#e3edf9] to-[#b9d0ef]">
          <button aria-label="Обычный" className="flex w-[19px] items-center justify-center bg-[#fbd67f]">
            <svg width="13" height="10" viewBox="0 0 13 10" aria-hidden="true"><path d="M.5 .5h12v9H.5zM.5 3.500h12M.5 6.500h12M4.500 .5v9M8.500 .5v9" fill="#fff" stroke="#777" /></svg>
          </button>
          <button aria-label="Разметка" className="flex w-[18px] items-center justify-center">
            <svg width="12" height="11" viewBox="0 0 12 11" aria-hidden="true"><rect x=".5" y=".5" width="11" height="10" fill="#8b8b8b" stroke="#666" /><rect x="3" y="1.500" width="6" height="8" fill="#fff" /><path d="M4 3.500h4M4 5.500h4M4 7.500h4" stroke="#888" /></svg>
          </button>
          <button aria-label="Страничный" className="flex w-[18px] items-center justify-center">
            <svg width="12" height="11" viewBox="0 0 12 11" aria-hidden="true"><rect x=".5" y=".5" width="11" height="10" fill="#8b8b8b" stroke="#666" /><path d="M1 1h3v5H1zM5 1h3v5H5z" fill="#fff" /></svg>
          </button>
        </div>
        <button className="w-[43px] text-center">100%</button>
        <button aria-label="Уменьшить" className="flex"><ZoomKnob /></button>
        <input
          type="range"
          aria-label="Масштаб"
          defaultValue={49}
          className="h-4 min-w-0 flex-1 appearance-none bg-transparent bg-linear-to-b from-transparent from-45% via-[#55729f] via-50% to-transparent to-55% outline-none [&::-webkit-slider-thumb]:h-[13px] [&::-webkit-slider-thumb]:w-[9px] [&::-webkit-slider-thumb]:appearance-none [&::-webkit-slider-thumb]:rounded-b-[5px] [&::-webkit-slider-thumb]:border [&::-webkit-slider-thumb]:border-[#55729f] [&::-webkit-slider-thumb]:bg-[#e4edf8]"
        />
        <button aria-label="Увеличить" className="mr-1 flex"><ZoomKnob plus /></button>
      </div>
    </div>
  );
}

/* ---------- taskbar ---------- */

const StartOrb = () => (
  <svg width="38" height="38" viewBox="0 0 38 38" aria-hidden="true">
    <defs>
      <radialGradient id="start" cx="50%" cy="90%" r="90%">
        <stop offset="0" stopColor="#35d0ee" />
        <stop offset=".45" stopColor="#1573a8" />
        <stop offset="1" stopColor="#0c3458" />
      </radialGradient>
    </defs>
    <circle cx="19" cy="19" r="18" fill="url(#start)" stroke="#12202c" strokeWidth="1.500" />
    <path d="M3 17a16 16 0 0 1 32 0q-16 6-32 0z" fill="#cfe4f2" opacity=".5" />
    <path d="M11 9q4-2.500 7.500 0L17 17q-4-2-7.500 0z" fill="#ee5a24" />
    <path d="M20 9.500q4 2.500 9 0L27 17q-4 2.500-8.500 .5z" fill="#82bf2c" />
    <path d="M9 18.500q4-2 7.500 0L15 26q-4-2.500-7.500 0z" fill="#3f9fe8" />
    <path d="M18 19q4 2.500 8.500 .5l-2 7q-4 2-8 0z" fill="#fcc81c" />
  </svg>
);

const Folder = () => (
  <svg width="14" height="16" viewBox="0 0 14 16" aria-hidden="true">
    <path d="M1 1h6l5 1v12H1z" fill="#f3d98a" stroke="#c39c3c" strokeWidth=".6" />
    <path d="M1 1l5 3v11.500L1 13.500z" fill="#fbeab2" />
    <path d="M8 8l5-1v7l-5 1z" fill="#e5bf5c" />
  </svg>
);

const WordIcon = () => (
  <svg width="16" height="16" viewBox="0 0 16 16" aria-hidden="true">
    <path d="M5.500 1.500h8l2 2v12h-10z" fill="#eaf1fc" stroke="#7d9bd0" />
    <path d="M8 10.500h6M8 12.500h6M12 5.500h2M12 7.500h2" stroke="#6d8fcd" />
    <rect y="1" width="11" height="9" fill="#3f6cc4" />
    <path d="M1.500 3l2 5.500 2-4.500 2 4.500 2-5.500" fill="none" stroke="#fff" strokeWidth="1.400" />
  </svg>
);

const taskIcons: Record<string, React.ReactNode> = {
  firefox: (
    <svg width="16" height="16" viewBox="0 0 16 16" aria-hidden="true">
      <circle cx="8" cy="8" r="7.500" fill="#e8691b" />
      <circle cx="8.500" cy="6.500" r="4.500" fill="#2c5aa8" />
      <path d="M1 3q2 1 4 1-1 3 2 4l3-1q-1 4-5 4-3-1-4-4z" fill="#f7a823" />
      <path d="M12 2q4 4 1.500 9Q11 15 6 14.500q6-1.500 6-6.500z" fill="#f9c33a" />
    </svg>
  ),
  folder: <Folder />,
  phone: (
    <svg width="16" height="16" viewBox="0 0 16 16" aria-hidden="true">
      <rect x="6.500" y=".5" width="9" height="15" fill="#11a011" stroke="#fff" />
      <path d="M7 2Q.5 2 .5 8T7 13z" fill="#1fb51f" stroke="#fff" />
      <path d="M6 4.500L2.500 8 6 11.500" fill="#fff" />
      <path d="M9.500 3.500h4v4h-4z" fill="#11a011" stroke="#fff" />
    </svg>
  ),
  result: (
    <svg width="15" height="16" viewBox="0 0 15 16" aria-hidden="true">
      <path d="M3.500 .5h9v11h-9z" fill="#cfe2f6" stroke="#7fa3cd" />
      <path d="M.5 3.500h10v12H.5z" fill="#cfe2f6" stroke="#7fa3cd" />
      <circle cx="9" cy="6" r="3" fill="#f8fcff" stroke="#5a83b8" />
      <path d="M7 8l-4 5" stroke="#5a83b8" strokeWidth="1.600" />
    </svg>
  ),
  word: <WordIcon />,
  excel: (
    <svg width="15" height="16" viewBox="0 0 15 16" aria-hidden="true">
      <path d="M4 .5h8.500l2 2v13H.5V5z" fill="#f2faf2" stroke="#4a9a4a" />
      <path d="M1 6l3-4h9v2H6L4 6v7H1z" fill="#4fa552" />
      <path d="M4 5.500l6.500 7.500M10.500 5.500L4 13" stroke="#23802c" strokeWidth="2.200" />
    </svg>
  ),
  image: (
    <svg width="15" height="16" viewBox="0 0 15 16" aria-hidden="true">
      <rect x=".5" y=".5" width="12" height="14" fill="#f3f6fb" stroke="#6c7684" />
      <rect x="1.500" y="1.500" width="9" height="8" fill="#274ea0" />
      <path d="M2 8q4-5 8-1v2.500H2z" fill="#8fb4ea" />
      <path d="M2 12h5" stroke="#20242c" strokeWidth="3" />
      <path d="M14.500 4.500l-7 8" stroke="#8f3f2c" strokeWidth="1.800" />
    </svg>
  ),
};

const tasks: [string, string][] = [
  ["firefox", "Элина Лысоко..."],
  ["folder", "Лабораторные"],
  ["phone", "(H:) Sony Erics..."],
  ["folder", "100CANON"],
  ["result", "Результаты по..."],
  ["word", "методичка мо..."],
  ["word", "отчёт №2 Exc..."],
  ["excel", "Microsoft Excel..."],
  ["image", "2(1).png (59%..."],
];

function QuickLaunch() {
  return (
    <div className="flex items-center gap-[7px]">
      <button aria-label="Media Player Classic">
        <svg width="15" height="15" viewBox="0 0 15 15" aria-hidden="true">
          <rect x="1" y="5" width="13" height="10" fill="#f2f2f2" />
          <path d="M0 2l12-2 2 3L1 5z" fill="#222" />
          <path d="M3 1.500l2 3M7 1l2 3M11 .5l2 3" stroke="#fff" />
          <path d="M2 8h2.500v5H2M4.500 10.500H2.500" fill="none" stroke="#c22" strokeWidth="1.200" />
          <path d="M6.500 8H9v2.500H6.500V13H9" fill="none" stroke="#27c" strokeWidth="1.200" />
          <path d="M11.500 7.500V13.500" stroke="#2a2" strokeWidth="1.400" />
        </svg>
      </button>
      <button aria-label="Opera">
        <svg width="15" height="16" viewBox="0 0 15 16" aria-hidden="true"><path fillRule="evenodd" d="M7.500 .5a7 7.500 0 1 0 0 15 7 7.500 0 1 0 0-15zm0 2.500c2 0 2.500 2 2.500 5s-.5 5-2.500 5S5 11 5 8s.5-5 2.500-5z" fill="#d6131b" /></svg>
      </button>
      <button aria-label="Сохранение">
        <svg width="16" height="16" viewBox="0 0 16 16" aria-hidden="true"><path d="M.5 .5h15v15H.5z" fill="#2a4fd6" stroke="#173094" /><rect x="4" y="0" width="8" height="6" fill="#e8ecf6" /><rect x="8" y="1" width="2" height="4" fill="#2a4fd6" /><rect x="2" y="8" width="12" height="7" fill="#fff" /><path d="M3 10.500h10M3 13h10" stroke="#d33" strokeWidth="1.200" /></svg>
      </button>
      <button aria-label="Проигрыватель">
        <svg width="16" height="16" viewBox="0 0 16 16" aria-hidden="true"><rect x=".5" y=".5" width="15" height="15" fill="#f79a1e" stroke="#5fb2ee" /><circle cx="8" cy="8" r="5.500" fill="#fff" /><path d="M6 4.500v7l5-3.500z" fill="#1f5fb8" /></svg>
      </button>
      <button aria-label="Internet Explorer">
        <svg width="17" height="16" viewBox="0 0 17 16" fill="none" aria-hidden="true"><path d="M13.500 11A5.500 5.500 0 1 1 14 8.500H5" stroke="#2fa3ee" strokeWidth="3" /><path d="M2 15q-3-3 3-9T16 1q1 2-2 5" stroke="#f2c12c" strokeWidth="1.500" /></svg>
      </button>
    </div>
  );
}

function Taskbar() {
  return (
    <footer className="flex h-[30px] shrink-0 items-center overflow-hidden border-t border-[#3b3b3b] bg-linear-to-b from-[#a29a9a] via-[#4b4c4e] via-45% to-[#141517] pl-[11px] font-[Open_Sans,sans-serif] text-white shadow-[inset_0_1px_0_#c9bdbd]">
      <button aria-label="Пуск" className="mr-[22px] h-[30px] shrink-0 self-start"><StartOrb /></button>
      <QuickLaunch />
      <button aria-label="Другие значки" className="mb-2 ml-[28px] flex w-[10px]">
        <svg width="9" height="7" viewBox="0 0 9 7" fill="none" stroke="#fff" strokeWidth="1.500" aria-hidden="true"><path d="M1 .5l3 3-3 3M5 .5l3 3-3 3" /></svg>
      </button>
      <div className="ml-[8px] flex min-w-0 flex-1 gap-[3px]">
        {tasks.map(([icon, label]) => (
          <button
            key={label}
            className={`flex h-[27px] w-[132px] items-center gap-[5px] overflow-hidden rounded-[3px] border px-[7px] text-[12px] whitespace-nowrap ${icon === "excel" ? "border-[#0a0a0a] bg-linear-to-b from-[#2c2d2f] to-[#0b0b0c]" : "border-[#77797b] bg-linear-to-b from-[#a3a3a4] via-[#4f5153] via-48% to-[#232527] shadow-[inset_0_0_0_1px_#33353766]"}`}
          >
            <span className="shrink-0">{taskIcons[icon]}</span>
            {label}
          </button>
        ))}
      </div>
      <div className="flex items-center pr-[13px]">
        <button className="h-[16px] w-[16px] bg-[#3399ff] text-center text-[11px] leading-[16px]">RU</button>
        <button aria-label="Показать скрытые значки" className="mb-1 ml-[15px]">
          <svg width="8" height="8" viewBox="0 0 8 8" fill="none" stroke="#fff" strokeWidth="2" aria-hidden="true"><path d="M6.500 .5L2 4l4.500 3.500" /></svg>
        </button>
        <svg width="17" height="16" viewBox="0 0 17 16" className="ml-[7px]" aria-hidden="true"><rect x="5" y="1" width="11" height="8" fill="#0a4fe0" stroke="#27d3f5" /><rect x="1" y="5" width="11" height="8" fill="#0a4fe0" stroke="#27d3f5" /><path d="M3 15h7" stroke="#27d3f5" strokeWidth="1.500" /></svg>
        <svg width="15" height="16" viewBox="0 0 15 16" className="ml-[2px]" aria-hidden="true"><path d="M9 5l3-4 3 2-3 4z" fill="#e9ecef" stroke="#777" strokeWidth=".5" /><path d="M0 14V7l2 1.500L8 4l4 4-5 4.500 1.500 1.500z" fill="#36c41d" /></svg>
        <svg width="17" height="17" viewBox="0 0 17 17" className="ml-[2px]" aria-hidden="true"><path d="M1 1h3v14H1zM9 1h5L8 8l5 6H9L4 8z" fill="#e02020" stroke="#fff" strokeWidth=".6" /><circle cx="11.500" cy="12" r="3.500" fill="#f6e94a" /><path d="M11.500 7v10M6.500 12h10M8 8.500l7 7M15 8.500l-7 7" stroke="#f6e94a" strokeWidth="1.200" /><circle cx="11.500" cy="12" r="1.300" fill="#7d8b20" /></svg>
        <time className="ml-[7px] w-[34px] text-right text-[13px]">20:39</time>
      </div>
    </footer>
  );
}

export default function App() {
  return (
    <div className="relative flex h-screen w-full flex-col overflow-hidden bg-[#d9e7f8] font-[Noto_Sans,sans-serif]">
      <TitleBar />
      <TabRow />
      <Ribbon />
      <FormulaBar />
      <div className="h-[3px] shrink-0 border-b border-[#6f93c0] bg-[#e4eefb]" />
      <main className="flex min-h-0 flex-1">
        <Grid />
        <VerticalScroll />
      </main>
      <SheetBar />
      <StatusBar />
      <Taskbar />
      <button aria-label="Кнопка Office" className="absolute top-[2px] left-[1px]"><OfficeOrb /></button>
    </div>
  );
}
